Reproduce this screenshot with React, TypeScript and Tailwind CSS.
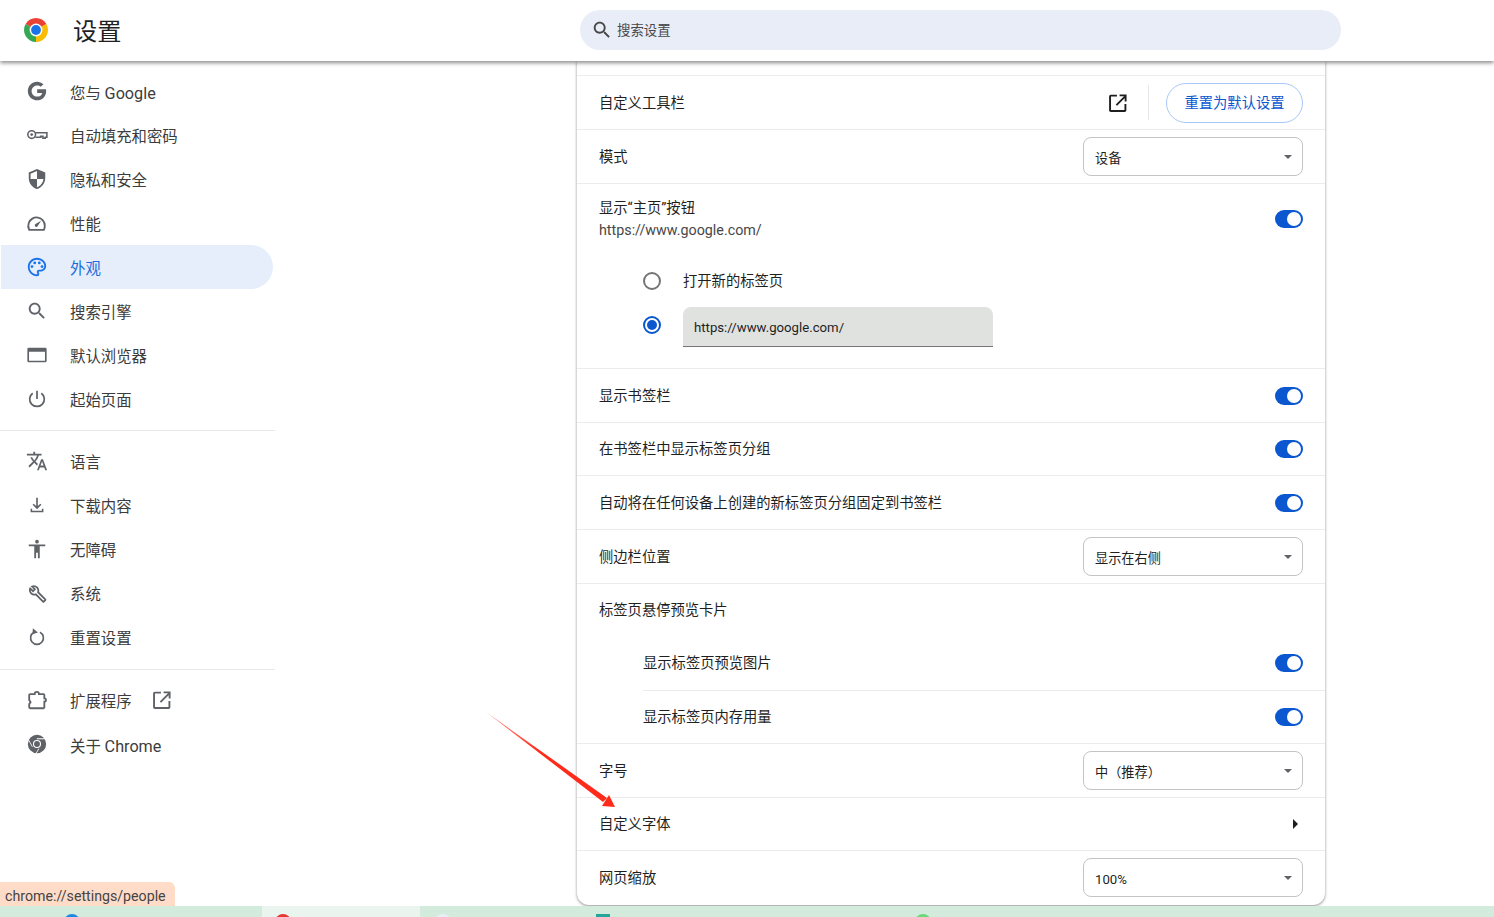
import type { ReactNode } from "react";

const fontStack = "font-['Roboto','Noto_Sans_CJK_SC',sans-serif]";

function Icon({ children, className = "w-[22px] h-[22px]" }: { children: ReactNode; className?: string }) {
  return (
    <svg viewBox="0 0 24 24" className={className} fill="currentColor">
      {children}
    </svg>
  );
}

function OpenInNew({ className }: { className: string }) {
  return (
    <svg viewBox="1.500 1.500 17 17" className={className} fill="none" stroke="currentColor" strokeWidth="1.800">
      <path d="M9 3H3.200A.7.7 0 0 0 2.500 3.700v13.100a.7.7 0 0 0 .7.7h13.100a.7.7 0 0 0 .7-.7V11" />
      <path d="M8.500 12 17 3.500M11.500 2.800h5.700v5.700" />
    </svg>
  );
}

function ChromeLogo() {
  return (
    <svg viewBox="0 0 24 24" className="w-6 h-6">
      <path d="M12 12 1.610 6A12 12 0 0 1 22.390 6Z" fill="#ea4335" />
      <path d="M12 12 22.390 6A12 12 0 0 1 12 24Z" fill="#fbbc04" />
      <path d="M12 12 12 24A12 12 0 0 1 1.610 6Z" fill="#34a853" />
      <circle cx="12" cy="12" r="6.400" fill="#fff" />
      <circle cx="12" cy="12" r="4.900" fill="#1a73e8" />
    </svg>
  );
}

const icons: Record<string, ReactNode> = {
  google: (
    <Icon>
      <path d="M12.200 10.200v3.900h5.500c-.5 2.500-2.600 4-5.500 4-3.400 0-6.100-2.700-6.100-6.100s2.700-6.100 6.100-6.100c1.500 0 2.900.5 3.900 1.500l2.900-2.900C17 2.800 14.800 1.800 12.200 1.800 6.500 1.800 2 6.300 2 12s4.500 10.200 10.200 10.200c5.100 0 9.800-3.700 9.800-10.200 0-.6-.1-1.200-.2-1.800h-9.600Z" />
    </Icon>
  ),
  key: (
    <Icon>
      <circle cx="6.200" cy="11.500" r="4.200" fill="none" stroke="currentColor" strokeWidth="1.700" />
      <circle cx="6.200" cy="11.500" r="1.500" />
      <path
        fill="none"
        stroke="currentColor"
        strokeWidth="1.700"
        d="M10.200 9.500H22.800V14.500H21V15.500H18.500V13.500H16V14.500H10.200"
      />
    </Icon>
  ),
  shield: (
    <Icon>
      <path d="M12 1 3 5v6c0 5.550 3.840 10.740 9 12 5.160-1.260 9-6.450 9-12V5l-9-4zm0 10.990h7c-.53 4.120-3.280 7.790-7 8.940V12H5V6.300l7-3.110v8.800z" />
    </Icon>
  ),
  gauge: (
    <Icon>
      <path fill="none" stroke="currentColor" strokeWidth="2" d="M5 19.500h14.500a9.400 9.400 0 0 0 1-4.500 9 9 0 0 0-17.500-3 9.500 9.500 0 0 0 .5 7.500Z" />
      <path d="m16.500 9.500-3.400 5.200a1.800 1.800 0 1 1-2.300-1.900Z" />
    </Icon>
  ),
  palette: (
    <Icon>
      <path d="M12 22C6.490 22 2 17.510 2 12S6.490 2 12 2s10 4.040 10 9c0 3.310-2.690 6-6 6h-1.770c-.28 0-.5.220-.5.500 0 .12.050.23.130.33.410.47.640 1.060.640 1.670A2.500 2.500 0 0 1 12 22zm0-18c-4.410 0-8 3.590-8 8s3.590 8 8 8c.28 0 .5-.22.5-.5a.54.54 0 0 0-.14-.35c-.41-.46-.63-1.050-.63-1.650a2.500 2.500 0 0 1 2.500-2.500H16c2.210 0 4-1.790 4-4 0-3.860-3.590-7-8-7z" />
      <circle cx="6.500" cy="11.500" r="1.500" />
      <circle cx="9.500" cy="7.500" r="1.500" />
      <circle cx="14.500" cy="7.500" r="1.500" />
      <circle cx="17.500" cy="11.500" r="1.500" />
    </Icon>
  ),
  search: (
    <Icon>
      <path d="M15.500 14h-.79l-.28-.27C15.410 12.590 16 11.110 16 9.500 16 5.910 13.090 3 9.500 3S3 5.910 3 9.500 5.910 16 9.500 16c1.610 0 3.090-.59 4.230-1.570l.27.280v.79l5 4.990L20.490 19l-4.990-5zm-6 0C7.010 14 5 11.990 5 9.500S7.010 5 9.500 5 14 7.010 14 9.500 11.990 14 9.500 14z" />
    </Icon>
  ),
  browser: (
    <Icon>
      <path fillRule="evenodd" d="M3 4h18a1.500 1.500 0 0 1 1.500 1.500v13A1.500 1.500 0 0 1 21 20H3a1.500 1.500 0 0 1-1.500-1.500v-13A1.500 1.500 0 0 1 3 4Zm.3 4.500v9.700h17.400V8.500H3.300Z" />
    </Icon>
  ),
  power: (
    <Icon>
      <path fill="none" stroke="currentColor" strokeWidth="1.900" d="M12 3v9M7.300 5.700a8 8 0 1 0 9.400 0" />
    </Icon>
  ),
  translate: (
    <Icon>
      <path d="M12.870 15.070l-2.540-2.510.03-.03c1.740-1.940 2.980-4.170 3.710-6.530H17V4h-7V2H8v2H1v1.990h11.170C11.500 7.920 10.440 9.750 9 11.350 8.070 10.320 7.300 9.190 6.690 8h-2c.73 1.630 1.730 3.170 2.980 4.560l-5.090 5.020L4 19l5-5 3.110 3.110.760-2.040zM18.500 10h-2L12 22h2l1.120-3h4.750L21 22h2l-4.500-12zm-2.620 7l1.620-4.330L19.120 17h-3.240z" />
    </Icon>
  ),
  download: (
    <Icon>
      <path d="M5 20h14v-4h-1.700v2.300H6.700V16H5v4zm7-3.500 4.800-4.800-1.200-1.200-2.700 2.700V4h-1.800v9.200l-2.700-2.700-1.200 1.200 4.800 4.800z" />
    </Icon>
  ),
  accessibility: (
    <Icon>
      <path d="M21 9h-6v13h-2v-6h-2v6H9V9H3V7h18v2zm-9-7a2 2 0 1 1 0 4 2 2 0 0 1 0-4z" />
    </Icon>
  ),
  wrench: (
    <Icon className="w-[19px] h-[19px]">
      <path fill="none" stroke="currentColor" strokeWidth="2.200" d="m21.800 19.400-9.100-9.100c.7-2 .3-4.300-1.300-5.900C9.700 2.700 7.200 2.300 5.200 3.200L8.700 6.700 6.300 9.100 2.800 5.600c-.9 2-.5 4.500 1.200 6.200 1.600 1.600 3.900 2 5.900 1.300l9.100 9.100c.3.300.7.300 1 0l1.800-1.800c.3-.3.300-.7 0-1Z" />
    </Icon>
  ),
  reset: (
    <Icon>
      <path fill="none" stroke="currentColor" strokeWidth="1.800" d="M8.800 6.800a7 7 0 1 0 6.400 0" />
      <path d="M7.500 2.500 13 7l-6 2Z" />
    </Icon>
  ),
  extension: (
    <Icon>
      <path
        fill="none"
        stroke="currentColor"
        strokeWidth="2"
        d="M4.500 5.500h5a2.300 2.300 0 0 1 4.600 0H19a1 1 0 0 1 1 1v3.800a1.800 1.800 0 0 1 0 3.600V20a1 1 0 0 1-1 1H4.500a1 1 0 0 1-1-1v-3.500l1.500-2-1.500-2.500V6.500a1 1 0 0 1 1-1Z"
      />
    </Icon>
  ),
  chrome: (
    <Icon>
      <path fillRule="evenodd" d="M12 2a10 10 0 1 1 0 20 10 10 0 0 1 0-20Zm0 5.600a4.400 4.400 0 1 0 0 8.800 4.400 4.400 0 0 0 0-8.800Z" />
      <circle cx="12" cy="12" r="3.200" />
      <path fill="#fff" d="M12 6.800h9.400l-.5-1H11.500ZM7.300 14.600 3 7l-.5.900 4.200 7.500ZM13.500 17.200 8.900 25h1l4.600-8Z" />
    </Icon>
  ),
};

const navGroups = [
  [
    { icon: "google", label: "您与 ", latin: "Google" },
    { icon: "key", label: "自动填充和密码" },
    { icon: "shield", label: "隐私和安全" },
    { icon: "gauge", label: "性能" },
    { icon: "palette", label: "外观", active: true },
    { icon: "search", label: "搜索引擎" },
    { icon: "browser", label: "默认浏览器" },
    { icon: "power", label: "起始页面" },
  ],
  [
    { icon: "translate", label: "语言" },
    { icon: "download", label: "下载内容" },
    { icon: "accessibility", label: "无障碍" },
    { icon: "wrench", label: "系统" },
    { icon: "reset", label: "重置设置" },
  ],
];

type NavItemProps = { icon: string; label: string; latin?: string; active?: boolean; children?: ReactNode };

function NavItem({ icon, label, latin, active, children }: NavItemProps) {
  return (
    <div
      className={`ml-px flex h-11 w-[272px] items-center rounded-r-full pl-[25px] text-[15.4px] ${
        active ? "bg-[#e6eefc] text-[#1a6bdb]" : "text-[#3c3c3c]"
      }`}
    >
      <span className={`mr-[22px] flex w-[22px] justify-center ${active ? "text-[#1a73e8]" : "text-[#5f6368]"}`}>{icons[icon]}</span>
      <span className="mt-1.5 whitespace-pre">
        {label}
        {latin && <span className="text-[16.2px]">{latin}</span>}
      </span>
      {children}
    </div>
  );
}

function Sidebar() {
  return (
    <nav className="w-[275px] shrink-0 pt-2">
      {navGroups.map((group, i) => (
        <div key={i} className={`mb-2 border-b border-[#e8e8e8] ${i === 0 ? "pb-[9px]" : "pb-[10px]"}`}>
          {group.map((item) => (
            <NavItem key={item.label} {...item} />
          ))}
        </div>
      ))}
      <NavItem icon="extension" label="扩展程序">
        <OpenInNew className="ml-[21px] h-[18px] w-[18px] text-[#5f6368]" />
      </NavItem>
      <NavItem icon="chrome" label="关于 " latin="Chrome" />
    </nav>
  );
}

function Toggle() {
  return (
    <span className="flex h-[18px] w-7 items-center justify-end rounded-full bg-[#0b57d0] pr-0.5">
      <span className="h-[14px] w-[14px] rounded-full bg-white" />
    </span>
  );
}

function Select({ value, className = "" }: { value: string; className?: string }) {
  return (
    <div className={`flex h-[39px] w-[220px] items-center justify-between rounded-lg border border-[#c4c4c4] pl-[11px] pr-[10px] text-[13.2px] text-[#1f1f1f] ${className}`}>
      <span className="mt-1">{value}</span>
      <span className="h-0 w-0 border-x-[4px] border-t-[4px] border-x-transparent border-t-[#5f6368]" />
    </div>
  );
}

function Row({ label, h, children }: { label: string; h: string; children?: ReactNode }) {
  return (
    <div className={`flex items-center justify-between border-t border-[#ececec] px-[22px] ${h}`}>
      <span className="mt-0.5">{label}</span>
      {children}
    </div>
  );
}

function Radio({ checked }: { checked?: boolean }) {
  return (
    <span
      className={`flex h-[18px] w-[18px] items-center justify-center rounded-full border-2 ${
        checked ? "border-[#0b57d0]" : "border-[#757575]"
      }`}
    >
      {checked && <span className="h-[10px] w-[10px] rounded-full bg-[#0b57d0]" />}
    </span>
  );
}

function Card() {
  return (
    <section className="ml-[302px] h-[844px] w-[748px] rounded-b-xl bg-white pt-[14px] text-[14.3px] text-[#1f1f1f] shadow-[0_1px_3px_rgba(0,0,0,0.45)]">
      <Row label="自定义工具栏" h="h-[54px]">
        <div className="flex items-center">
          <OpenInNew className="h-[18px] w-[18px] text-[#1f1f1f]" />
          <span className="ml-[21px] mr-[17px] h-[35px] w-px bg-[#e8e8e8]" />
          <span className="flex h-10 w-[137px] items-center justify-center rounded-full border border-[#a8c7fa] pt-0.5 text-[#0b57d0]">
            重置为默认设置
          </span>
        </div>
      </Row>
      <Row label="模式" h="h-[54px]">
        <Select value="设备" />
      </Row>

      <div className="h-[185px] border-t border-[#ececec]">
        <div className="flex items-center justify-between px-[22px] pt-[13px]">
          <div>
            <div className="h-[22px] leading-[23px]">显示“主页”按钮</div>
            <div className="h-[22px] leading-[22px] text-[#474747]">https://www.google.com/</div>
          </div>
          <Toggle />
        </div>
        <div className="ml-[66px] mt-[18px] flex h-[44px] items-center">
          <Radio />
          <span className="ml-[22px] mt-0.5">打开新的标签页</span>
        </div>
        <div className="ml-[66px] mt-1 flex">
          <span className="mt-[9px]">
            <Radio checked />
          </span>
          <div className="ml-[22px] flex h-10 w-[310px] items-center rounded-t-lg border-b border-[#757575] bg-[#e0e2df] pl-[11px] pt-0.5 text-[13.2px] text-[#1f1f1f]">
            https://www.google.com/
          </div>
        </div>
      </div>

      <Row label="显示书签栏" h="h-[54px]">
        <Toggle />
      </Row>
      <Row label="在书签栏中显示标签页分组" h="h-[53px]">
        <Toggle />
      </Row>
      <Row label="自动将在任何设备上创建的新标签页分组固定到书签栏" h="h-[54px]">
        <Toggle />
      </Row>
      <Row label="侧边栏位置" h="h-[54px]">
        <Select value="显示在右侧" />
      </Row>

      <div className="h-[160px] border-t border-[#ececec]">
        <div className="flex h-[52px] items-center px-[22px] pt-0.5">标签页悬停预览卡片</div>
        <div className="ml-[66px] flex h-[54px] items-center justify-between pr-[22px]">
          <span className="mt-0.5">显示标签页预览图片</span>
          <Toggle />
        </div>
        <div className="ml-[66px] flex h-[53px] items-center justify-between border-t border-[#ececec] pr-[22px]">
          <span className="mt-0.5">显示标签页内存用量</span>
          <Toggle />
        </div>
      </div>

      <Row label="字号" h="h-[54px]">
        <Select value="中（推荐）" />
      </Row>
      <Row label="自定义字体" h="h-[53px]">
        <span className="mr-[5px] h-0 w-0 border-y-[5px] border-l-[5px] border-y-transparent border-l-[#1f1f1f]" />
      </Row>
      <Row label="网页缩放" h="h-[55px]">
        <Select value="100%" className="-mt-px" />
      </Row>
    </section>
  );
}

export default function App() {
  return (
    <div className={`relative flex h-[917px] w-[1494px] flex-col overflow-hidden bg-white ${fontStack}`}>
      <header className="relative z-10 flex h-[61px] shrink-0 items-center bg-white shadow-[0_2px_4px_rgba(0,0,0,0.45)]">
        <div className="flex w-[580px] items-center pl-6">
          <ChromeLogo />
          <h1 className="ml-[25px] mt-1 text-[24.2px] text-[#1f1f1f]">设置</h1>
        </div>
        <div className="-mt-px flex h-10 w-[761px] items-center rounded-full bg-[#e9edf7] pl-[11px] text-[13.4px] text-[#474747]">
          <span className="mr-1 flex text-[#474747]">{icons.search}</span>
          <span className="mt-0.5">搜索设置</span>
        </div>
      </header>

      <main className="flex min-h-0 flex-1">
        <Sidebar />
        <Card />
      </main>

      <footer className="flex h-[11px] shrink-0 overflow-hidden bg-[#d3ebdd]">
        <div className="w-[262px] pl-[64px] pt-2">
          <span className="block h-4 w-4 rounded-full bg-[#1e88e5]" />
        </div>
        <div className="w-[158px] bg-[#ebf5f0] pl-[13px] pt-2">
          <span className="block h-4 w-4 rounded-full bg-[#e53935]" />
        </div>
        <div className="w-[173px] pl-[15px] pt-2">
          <span className="block h-4 w-4 rounded-full bg-[#e8eef8]" />
        </div>
        <div className="w-[322px] pl-[3px] pt-2">
          <span className="block h-4 w-[14px] bg-[#26a69a]" />
        </div>
        <div className="pt-2">
          <span className="block h-4 w-4 rounded-full bg-[#66d97a]" />
        </div>
      </footer>

      {/* hover url bubble */}
      <div className="absolute bottom-[11px] left-0 flex h-[24px] w-[175px] items-center rounded-tr-md bg-[#ffdcc8] pl-[5px] pt-1.5 text-[14.2px] text-[#444]">
        chrome://settings/people
      </div>

      {/* red annotation arrow */}
      <svg className="absolute left-[480px] top-[705px] h-[110px] w-[145px]" viewBox="0 0 145 110">
        <defs>
          <linearGradient id="arrowFade" x1="8" y1="9" x2="60" y2="47" gradientUnits="userSpaceOnUse">
            <stop offset="0" stopColor="#ff2a1a" stopOpacity="0.5" />
            <stop offset="1" stopColor="#ff2a1a" />
          </linearGradient>
        </defs>
        <path d="M6 7 127 93 123 97Z" fill="url(#arrowFade)" />
        <path d="M135 102 122 101 129 90Z" fill="#ff2a1a" />
      </svg>
    </div>
  );
}
